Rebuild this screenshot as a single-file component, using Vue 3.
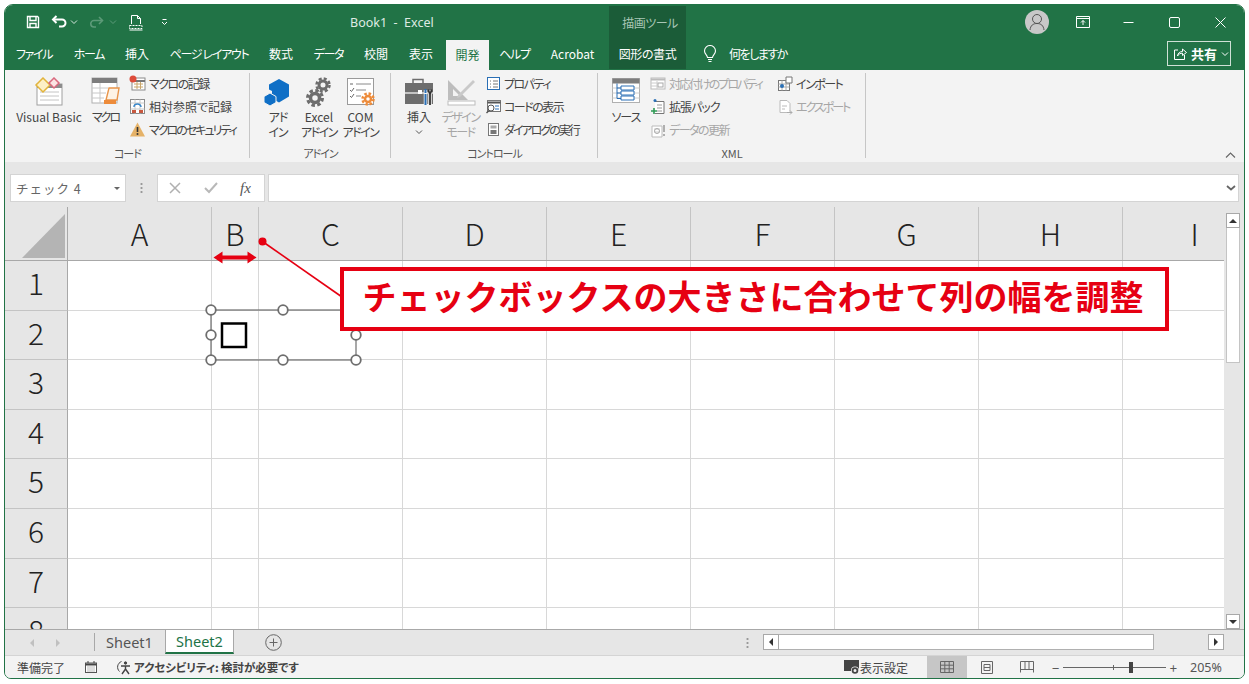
<script setup>
// Column widths and row labels of the visible part of the sheet
const columns = [
  { name: 'A', width: 144 },
  { name: 'B', width: 47 },
  { name: 'C', width: 144 },
  { name: 'D', width: 144 },
  { name: 'E', width: 144 },
  { name: 'F', width: 144 },
  { name: 'G', width: 144 },
  { name: 'H', width: 144 },
  { name: 'I', width: 144 }
]
const rows = ['1', '2', '3', '4', '5', '6', '7', '8']

const tabs = [
  { label: 'ファイル', width: 58, kana: true },
  { label: 'ホーム', width: 52, kana: true },
  { label: '挿入', width: 44 },
  { label: 'ページ レイアウト', width: 100, kana: true },
  { label: '数式', width: 44 },
  { label: 'データ', width: 51, kana: true },
  { label: '校閲', width: 44 },
  { label: '表示', width: 46 },
  { label: '開発', width: 43, active: true },
  { label: 'ヘルプ', width: 51, kana: true },
  { label: 'Acrobat', width: 65 }
]

// Selection handles of the checkbox, in page coordinates
const handles = [
  [211, 310], [283, 310], [356, 310],
  [211, 335], [356, 335],
  [211, 360], [283, 360], [356, 360]
]
</script>

<template>
  <div class="page">
    <div class="window">
      <!-- title bar -->
      <div class="titlebar">
        <div class="qat">
          <svg class="qi" style="margin-left:20px" width="16" height="16" viewBox="0 0 16 16" fill="none" stroke="#fff" stroke-width="1.4"><path d="M2.500 2.500h10l1 1v10h-11z"/><path d="M5 2.500v4h6v-4M5 13.500v-4h6v4"/></svg>
          <svg class="qi" style="margin-left:10px" width="17" height="16" viewBox="0 0 17 16" fill="none" stroke="#fff" stroke-width="2"><path d="M5.500 2 2 5.500 5.500 9"/><path d="M2.500 5.500H11a3.500 3.500 0 0 1 0 7H8"/></svg>
          <svg class="qi" style="margin-left:2px" width="8" height="6" viewBox="0 0 8 6" fill="none" stroke="#d6e6dc" stroke-width="1"><path d="M1 1.500 4 4.500 7 1.500"/></svg>
          <svg class="qi" style="margin-left:10px" width="16" height="16" viewBox="0 0 16 16" fill="none" stroke="#5c9a78" stroke-width="1.6"><path d="M11 3l3.500 3.500L11 10"/><path d="M14 6.500H6a3.200 3.200 0 0 0 0 6.500h2"/></svg>
          <svg class="qi" style="margin-left:5px" width="8" height="6" viewBox="0 0 8 6" fill="none" stroke="#5c9a78" stroke-width="1"><path d="M1 1.500 4 4.500 7 1.500"/></svg>
          <svg class="qi" style="margin-left:11px" width="16" height="17" viewBox="0 0 16 17" fill="none" stroke="#fff" stroke-width="1"><path d="M3.500 10V1.500h6l3 3V10M9.500 1.500v3h3"/><path d="M1.500 11.500h12.500v3H1.500z" stroke-dasharray="2 1"/><path d="M1.500 16h13"/></svg>
          <svg class="qi" style="margin-left:17px" width="7" height="8" viewBox="0 0 7 8" fill="none" stroke="#fff" stroke-width="1"><path d="M1.500 1.500h4M1 4l2.500 2.500L6 4"/></svg>
        </div>
        <div class="doc-title">Book1&nbsp; -&nbsp; Excel</div>
        <div class="tool-title">描画ツール</div>
        <div class="win-controls">
          <div class="avatar">
            <svg width="24" height="24" viewBox="0 0 24 24" fill="none" stroke="#555" stroke-width="1"><circle cx="12" cy="9" r="4.500"/><path d="M5 20c.5-4.500 3-6.500 7-6.500s6.500 2 7 6.500"/></svg>
          </div>
          <svg class="ctl ctl-display" width="14" height="12" viewBox="0 0 14 12" fill="none" stroke="#fff" stroke-width="1"><path d="M.5.500h13v11H.5zM.5 2.500h13M7 9V4.500M5 6.500l2-2 2 2" /></svg>
          <svg class="ctl ctl-min" width="11" height="11" viewBox="0 0 11 11" stroke="#fff" stroke-width="1"><path d="M.5 5.500h10"/></svg>
          <svg class="ctl ctl-max" width="11" height="11" viewBox="0 0 11 11" fill="none" stroke="#fff" stroke-width="1"><rect x=".5" y=".5" width="10" height="10" rx="1.500"/></svg>
          <svg class="ctl ctl-close" width="11" height="11" viewBox="0 0 11 11" stroke="#fff" stroke-width="1"><path d="M.5.500l10 10M10.500.5l-10 10"/></svg>
        </div>
      </div>

      <!-- ribbon tabs -->
      <div class="tabs">
        <div
          v-for="t in tabs"
          :key="t.label"
          class="tab"
          :class="{ active: t.active, kana: t.kana }"
          :style="{ width: t.width + 'px' }"
        >{{ t.label }}</div>
        <div class="tool-tab tab kana">図形の書式</div>
        <svg class="bulb" width="14" height="18" viewBox="0 0 14 18" fill="none" stroke="#fff" stroke-width="1.100"><path d="M4.500 12.500C4.300 10 1.500 9 1.500 6a5.500 5.500 0 0 1 11 0c0 3-2.800 4-3 6.500z"/><path d="M5 14.500h4M5.500 16.500h3"/></svg>
        <div class="tab search ls15">何をしますか</div>
        <div class="share">
          <svg width="14" height="14" viewBox="0 0 14 14" fill="none" stroke="#fff" stroke-width="1"><path d="M5 3H1.500v9.500h10V8"/><path d="M4.500 9c.3-3 2.500-4.500 5-4.500V2l4 3.500-4 3V6.200C7.500 6.200 5.500 7 4.500 9z"/></svg>
          <b>共有</b>
          <svg width="8" height="6" viewBox="0 0 8 6" fill="none" stroke="#fff" stroke-width="1"><path d="M1 1.500 4 4.500 7 1.500"/></svg>
        </div>
      </div>

      <!-- ribbon -->
      <div class="ribbon">
        <div class="group" style="width:245px">
          <div class="group-body">
            <div class="big" style="margin-left:6px;width:76px">
              <svg class="big-icon" width="30" height="30" viewBox="0 0 30 30">
                <rect x="3" y="7" width="25" height="21" fill="#fff" stroke="#a0a0a0"/>
                <rect x="3" y="7" width="25" height="4" fill="#8c8c8c"/>
                <path d="M6 15h19M6 19h19M6 23h19" stroke="#c4c4c4"/>
                <path d="M9 1l7 7-7 7-7-7z" fill="#fdf0c6" stroke="#e2b43c" stroke-width="1.500"/>
                <path d="M20 1l5 5-5 5-5-5z" fill="#fbe3e3" stroke="#d9687e" stroke-width="1.500"/>
              </svg>
              <span>Visual Basic</span>
            </div>
            <div class="big" style="width:37px">
              <svg class="big-icon" width="30" height="30" viewBox="0 0 30 30">
                <rect x="1" y="1" width="25" height="25" fill="#fff" stroke="#b0b0b0"/>
                <rect x="1" y="1" width="25" height="5" fill="#7d7d7d"/>
                <path d="M1 11h16M1 16h14M1 21h12M9 6v20" stroke="#c8c8c8"/>
                <path d="M18 11h10l-2 12h-11z" fill="#fdf3e6" stroke="#e8944a" stroke-width="1.400"/>
                <rect x="13" y="23" width="12" height="4" fill="#ed8b3a"/>
              </svg>
              <span class="ls2">マクロ</span>
            </div>
            <div class="small-col" style="margin-left:5px">
              <div class="small">
                <svg width="17" height="17" viewBox="0 0 17 17"><rect x="3" y="3" width="13" height="12" fill="#fff" stroke="#8a8a8a"/><path d="M3 6h13" stroke="#777" stroke-width="2"/><path d="M5 9h9M5 12h9M8 7v7M11.500 7v7" stroke="#c9a66b"/><circle cx="4" cy="4" r="3.500" fill="#dd4b39"/></svg>
                <span class="ls15">マクロの記録</span>
              </div>
              <div class="small">
                <svg width="17" height="17" viewBox="0 0 17 17"><rect x="1.500" y="1.500" width="14" height="14" fill="#fff" stroke="#8a8a8a"/><path d="M1.500 5h14M1.500 11h14M6 1.500v14M11 1.500v14" stroke="#c8c8c8"/><path d="M5 9a3.500 3 0 0 1 7 0" fill="none" stroke="#3a87c9" stroke-width="1.500"/><path d="M3 12h4v3H3zM10 12h4v3h-4z" fill="#c8583f"/></svg>
                <span>相対参照で記録</span>
              </div>
              <div class="small">
                <svg width="17" height="17" viewBox="0 0 17 17"><path d="M8.500 1.500 16 15.500H1z" fill="#e5b268"/><path d="M8.500 6v5" stroke="#333" stroke-width="1.600"/><circle cx="8.500" cy="13" r="1" fill="#333"/></svg>
                <span class="ls2">マクロのセキュリティ</span>
              </div>
            </div>
          </div>
          <div class="group-label ls1">コード</div>
        </div>

        <div class="group" style="width:141px">
          <div class="group-body">
            <div class="big" style="margin-left:8px;width:40px">
              <svg class="big-icon" width="30" height="30" viewBox="0 0 30 30">
                <path d="M16 2l10 5.500v12l-10 6-7-4V14l-3-1.500V7.500z" fill="#0f6fc6"/>
                <path d="M7 16l6 3.500v6L7 29l-6-3.500v-6z" fill="#0f6fc6" stroke="#f3f3f3"/>
              </svg>
              <span class="ls1">アド<br>イン</span>
            </div>
            <div class="big" style="width:42px">
              <svg class="big-icon" width="30" height="30" viewBox="0 0 30 30" fill="none">
                <circle cx="19" cy="8" r="4" stroke="#6d6d6d" stroke-width="3"/>
                <circle cx="19" cy="8" r="6.500" stroke="#6d6d6d" stroke-width="2.500" stroke-dasharray="3 2.100"/>
                <circle cx="11" cy="21" r="4.500" stroke="#6d6d6d" stroke-width="3.500"/>
                <circle cx="11" cy="21" r="7.500" stroke="#6d6d6d" stroke-width="3" stroke-dasharray="3.500 2.400"/>
              </svg>
              <span>Excel<br><span class="ls15">アドイン</span></span>
            </div>
            <div class="big" style="width:41px">
              <svg class="big-icon" width="30" height="30" viewBox="0 0 30 30" fill="none">
                <rect x="1.500" y="1.500" width="26" height="26" fill="#fff" stroke="#9a9a9a"/>
                <path d="M10 7h15M10 13h10M10 19h5" stroke="#8a8a8a"/>
                <path d="M4 7h3M4 13l1.500 1.500L8 11M4 19l1.500 1.500L8 17" stroke="#666"/>
                <circle cx="22" cy="22" r="3" stroke="#ed8b3a" stroke-width="2.500"/>
                <circle cx="22" cy="22" r="5.500" stroke="#ed8b3a" stroke-width="2.500" stroke-dasharray="2.500 1.800"/>
              </svg>
              <span>COM<br><span class="ls15">アドイン</span></span>
            </div>
          </div>
          <div class="group-label ls1">アドイン</div>
        </div>

        <div class="group" style="width:207px">
          <div class="group-body">
            <div class="big" style="margin-left:9px;width:38px">
              <svg class="big-icon" width="30" height="30" viewBox="0 0 30 30">
                <path d="M9 6V2.500h10V6" fill="none" stroke="#6d6d6d" stroke-width="1.500"/>
                <rect x="1" y="6" width="28" height="9" fill="#6d6d6d"/>
                <rect x="1" y="15" width="28" height="2" fill="#c4c4c4"/>
                <rect x="1" y="17" width="28" height="10" fill="#6d6d6d"/>
                <rect x="14" y="13" width="4" height="4" fill="#fff"/>
                <path d="M21.500 13v14" stroke="#f3f3f3" stroke-width="3.500"/>
                <path d="M26 13v14" stroke="#f3f3f3" stroke-width="3.500"/>
                <path d="M21.500 12v4M21.500 17v11" stroke="#2a6fb5" stroke-width="2"/>
                <path d="M24.500 12.500c0 3 1.500 3.500 1.500 5V28M27.500 12.500c0 3-1.500 3.500-1.500 5" fill="none" stroke="#333" stroke-width="1.800"/>
              </svg>
              <span>挿入</span>
              <svg class="more" width="8" height="6" viewBox="0 0 8 6" fill="none" stroke="#555" stroke-width="1"><path d="M1 1.500 4 4.500 7 1.500"/></svg>
            </div>
            <div class="big disabled" style="margin-left:3px;width:39px">
              <svg class="big-icon" width="30" height="30" viewBox="0 0 30 30" fill="none">
                <path d="M2 3v20h20zM7 12v7h7z" fill="#bdbdbd" fill-rule="evenodd"/>
                <path d="M12 18 27 3l2 2-15 15-3 1z" fill="#c9c9c9"/>
                <rect x="2" y="24" width="27" height="4" fill="#fff" stroke="#bdbdbd"/>
              </svg>
              <span class="ls15">デザイン<br>モード</span>
            </div>
            <div class="small-col" style="margin-left:6px">
              <div class="small">
                <svg width="15" height="15" viewBox="0 0 15 15" fill="none"><rect x="1.500" y="1.500" width="12" height="12" fill="#fff" stroke="#2a6fb5"/><path d="M4 5h1M7 5h5M4 8h1M7 8h5M4 11h1M7 11h5" stroke="#777"/></svg>
                <span class="ls15">プロパティ</span>
              </div>
              <div class="small">
                <svg width="15" height="15" viewBox="0 0 15 15" fill="none"><rect x="1.500" y="1.500" width="13" height="11" fill="#fff" stroke="#777"/><path d="M1.500 3.500h13" stroke="#555" stroke-width="2"/><path d="M9 7h4M9 10h4" stroke="#2a6fb5"/><circle cx="5" cy="9" r="3" fill="#fff" stroke="#555"/><path d="M3 11.500.5 14" stroke="#555" stroke-width="1.400"/></svg>
                <span class="ls15">コードの表示</span>
              </div>
              <div class="small">
                <svg width="15" height="15" viewBox="0 0 15 15" fill="none"><rect x="2.500" y="1.500" width="10" height="12" fill="#fff" stroke="#777"/><rect x="4.500" y="3.500" width="6" height="3" fill="#aaa"/><rect x="4.500" y="8" width="6" height="4" fill="#777"/></svg>
                <span class="ls2">ダイアログの実行</span>
              </div>
            </div>
          </div>
          <div class="group-label ls1">コントロール</div>
        </div>

        <div class="group" style="width:268px">
          <div class="group-body">
            <div class="big" style="margin-left:10px;width:36px">
              <svg class="big-icon" width="30" height="30" viewBox="0 0 30 30" fill="none">
                <rect x="1.500" y="1.500" width="27" height="24" fill="#fff" stroke="#b0b0b0"/>
                <rect x="1.500" y="1.500" width="27" height="5" fill="#7d7d7d"/>
                <path d="M1.500 11h27M1.500 16h27M1.500 21h27" stroke="#ccc"/>
                <path d="M6 6.500v15h4M6 11h4M6 16h4" stroke="#2a6fb5"/>
                <path d="M10 9h13v4H10zM10 14h13v4H10zM10 19h13v4H10z" fill="#fff" stroke="#2a6fb5"/>
              </svg>
              <span class="ls1">ソース</span>
            </div>
            <div class="small-col" style="margin-left:6px;width:127px">
              <div class="small disabled">
                <svg width="16" height="15" viewBox="0 0 16 15" fill="none"><rect x="1" y="2" width="14" height="11" fill="#fff" stroke="#bbb"/><path d="M1 3.500h14" stroke="#bbb" stroke-width="2"/><path d="M1 7h6M1 10h6M7 5v8" stroke="#ccc"/><rect x="8" y="7" width="5" height="4" stroke="#aaa"/></svg>
                <span class="ls2">対応付けのプロパティ</span>
              </div>
              <div class="small">
                <svg width="16" height="17" viewBox="0 0 16 17" fill="none"><path d="M5 3.500h9v12H5" fill="#fff" stroke="#777"/><path d="M7 7h5M7 10h5M7 13h5" stroke="#999"/><circle cx="5" cy="2.500" r="1.500" fill="#2a6fb5"/><path d="M1 13h6M4 10v6" stroke="#2e9a54" stroke-width="1.600"/></svg>
                <span class="ls1">拡張パック</span>
              </div>
              <div class="small disabled">
                <svg width="16" height="16" viewBox="0 0 16 16" fill="none"><path d="M2 4h10v11H2z" fill="#fff" stroke="#bbb"/><path d="M4 7h6M4 10h6" stroke="#ccc"/><circle cx="7" cy="9" r="2.500" stroke="#aaa"/><path d="M14 3v7M14 12v2" stroke="#999" stroke-width="1.500"/></svg>
                <span class="ls15">データの更新</span>
              </div>
            </div>
            <div class="small-col">
              <div class="small">
                <svg width="16" height="16" viewBox="0 0 16 16" fill="none"><rect x="1.500" y="4.500" width="11" height="10" fill="#fff" stroke="#777"/><path d="M1.500 8h11M1.500 11h11M5 4.500v10M9 4.500v10" stroke="#aaa"/><path d="M9 1h6v6H9z" fill="#fff" stroke="#777"/><circle cx="5" cy="10" r="2" fill="#2a6fb5"/></svg>
                <span class="ls15">インポート</span>
              </div>
              <div class="small disabled">
                <svg width="16" height="16" viewBox="0 0 16 16" fill="none"><path d="M3 1.500h7l3 3v9H3z" fill="#fff" stroke="#bbb"/><path d="M5 7h5M5 10h3" stroke="#bbb"/><path d="M10 13.500h5M13 11.500l2 2-2 2" stroke="#aaa"/></svg>
                <span class="ls2">エクスポート</span>
              </div>
            </div>
          </div>
          <div class="group-label">XML</div>
        </div>

        <div class="ribbon-rest">
          <svg width="11" height="7" viewBox="0 0 11 7" fill="none" stroke="#666" stroke-width="1.100"><path d="M1 5.500 5.500 1 10 5.500"/></svg>
        </div>
      </div>

      <!-- formula bar -->
      <div class="formula">
        <div class="namebox">
          <span>チェック 4</span>
          <i class="caret"></i>
        </div>
        <div class="fdots"></div>
        <div class="fbtns">
          <svg width="12" height="12" viewBox="0 0 12 12" stroke="#b0b0b0" stroke-width="1.500"><path d="M1 1l10 10M11 1 1 11"/></svg>
          <svg width="14" height="12" viewBox="0 0 14 12" fill="none" stroke="#b8b8b8" stroke-width="2"><path d="M1 6l4 4 8-9"/></svg>
          <span class="fx">fx</span>
        </div>
        <div class="finput">
          <svg width="10" height="6" viewBox="0 0 10 6" fill="none" stroke="#666" stroke-width="1.800"><path d="M1 1l4 3.500L9 1"/></svg>
        </div>
      </div>

      <!-- sheet -->
      <div class="sheet">
        <div class="grid">
          <div class="col-head">
            <div class="corner"><i></i></div>
            <div v-for="c in columns" :key="c.name" class="col-cell" :style="{ width: c.width + 'px' }">{{ c.name }}</div>
          </div>
          <div v-for="r in rows" :key="r" class="row">
            <div class="row-cell">{{ r }}</div>
            <div v-for="c in columns" :key="c.name" class="cell" :style="{ width: c.width + 'px' }"></div>
          </div>

          <!-- drawing layer floats over the cells -->
          <svg class="overlay" viewBox="5 207 1219 423" width="1219" height="423">
            <rect x="211" y="310" width="145" height="50" fill="none" stroke="#6e6e6e" stroke-width="1.200"/>
            <circle
              v-for="(h, i) in handles"
              :key="i"
              :cx="h[0]"
              :cy="h[1]"
              r="4.800"
              fill="#fff"
              stroke="#6e6e6e"
              stroke-width="1.800"
            />
            <rect x="222" y="323.500" width="24" height="23.500" fill="#fff" stroke="#000" stroke-width="2.500"/>
            <circle cx="262.500" cy="241.500" r="4" fill="#e60012"/>
            <path d="M262.500 241.500 342 297" stroke="#e60012" stroke-width="1.600"/>
            <path d="M213.500 257.500l9-6v4h25v-4l9 6-9 6v-4h-25v4z" fill="#e60012"/>
          </svg>
          <div class="callout">チェックボックスの大きさに合わせて列の幅を調整</div>
        </div>
        <div class="vscroll">
          <div class="sbtn"><i class="tri up"></i></div>
          <div class="vthumb"></div>
          <div class="vtrack"></div>
          <div class="sbtn"><i class="tri down"></i></div>
        </div>
      </div>

      <!-- sheet tabs -->
      <div class="sheetbar">
        <div class="nav">
          <i class="tri left dim"></i>
          <i class="tri right dim"></i>
        </div>
        <div class="sheet-tab first">Sheet1</div>
        <div class="sheet-tab current">Sheet2</div>
        <div class="add">
          <svg width="17" height="17" viewBox="0 0 17 17" fill="none" stroke="#666" stroke-width="1"><circle cx="8.500" cy="8.500" r="7.800"/><path d="M8.500 4.500v8M4.500 8.500h8"/></svg>
        </div>
        <div class="hdots"></div>
        <div class="hscroll">
          <div class="sbtn"><i class="tri left"></i></div>
          <div class="hthumb"></div>
          <div class="htrack"></div>
          <div class="sbtn"><i class="tri right"></i></div>
        </div>
      </div>

      <!-- status bar -->
      <div class="status">
        <span class="ready">準備完了</span>
        <svg class="st-macro" width="12" height="12" viewBox="0 0 12 12"><rect x=".5" y="2" width="11" height="9.500" fill="#fff" stroke="#555"/><path d="M.5 3.500h11" stroke="#444" stroke-width="2"/><path d="M2.500 6h7M2.500 8h7M2.500 10h7" stroke="#777" stroke-dasharray="1 1"/><path d="M3 0v2M9 0v2" stroke="#444"/></svg>
        <svg class="st-acc" width="16" height="15" viewBox="0 0 16 15" fill="none" stroke="#444"><path d="M5.500 1.500a6 6 0 0 0-2 10"/><circle cx="9.500" cy="3" r="1.200" fill="#444"/><path d="M5 6h9M9.500 6v3M6 14l3.500-5 3.500 5" stroke-width="1.400"/></svg>
        <span class="acc">アクセシビリティ: 検討が必要です</span>
        <svg class="st-view" width="16" height="15" viewBox="0 0 16 15"><rect x="0" y="0" width="15" height="11" fill="#444"/><circle cx="11" cy="10.500" r="4" fill="#f3f3f3"/><circle cx="11" cy="10.500" r="2.400" fill="none" stroke="#444" stroke-width="1.800"/></svg>
        <span class="view-label">表示設定</span>
        <div class="vbtn on">
          <svg width="14" height="12" viewBox="0 0 14 12" fill="none" stroke="#666"><path d="M.5.500h13v11H.5zM.5 4.200h13M.5 7.800h13M4.800.5v11M9.200.5v11"/></svg>
        </div>
        <div class="vbtn">
          <svg width="12" height="13" viewBox="0 0 12 13" fill="none" stroke="#666"><path d="M.5.500h11v12H.5z"/><path d="M3 3.500h6v6H3zM3 6.500h6"/></svg>
        </div>
        <div class="vbtn">
          <svg width="14" height="12" viewBox="0 0 14 12" fill="none" stroke="#666"><path d="M.5 11.500V.5h13v11M.5 8.500h13M5 .5v8M9 .5v8"/></svg>
        </div>
        <div class="zoom">
          <span class="zsign">−</span>
          <div class="zline"><i class="ztick"></i><i class="zknob"></i></div>
          <span class="zsign">+</span>
        </div>
        <span class="zval">205%</span>
      </div>
    </div>
  </div>
</template>

<style>
html, body {
  margin: 0;
  background: #fff;
}
</style>

<style scoped>
.page {
  width: 1249px;
  height: 684px;
  padding: 4px 0 0 4px;
  box-sizing: border-box;
  overflow: hidden;
  font-family: "Noto Sans CJK JP", "Noto Sans", sans-serif;
  font-feature-settings: "palt";
  color: #444;
}
.window {
  width: 1241px;
  height: 675px;
  box-sizing: border-box;
  border: 1px solid #217346;
  border-radius: 9px 9px 7px 7px;
  overflow: hidden;
  display: flex;
  flex-direction: column;
  background: #f3f3f3;
}

/* katakana in the Office UI font runs much narrower than Noto */
.ls1 { letter-spacing: -1px; }
.ls15 { letter-spacing: -1.500px; }
.ls2 { letter-spacing: -2px; }

/* title bar */
.titlebar {
  height: 33px;
  background: #217346;
  display: flex;
  flex-shrink: 0;
  color: #dfeae3;
}
.qat {
  width: 340px;
  display: flex;
  align-items: center;
  padding-top: 1px;
}
.qi {
  flex-shrink: 0;
}
.doc-title {
  width: 264px;
  font-size: 12.500px;
  line-height: 36px;
  padding-left: 5px;
  box-sizing: border-box;
  font-family: "Noto Sans", sans-serif;
}
.tool-title {
  width: 77px;
  margin-top: 1px;
  padding: 0 0 3px 5px;
  box-sizing: border-box;
  background: #1b5c38;
  font-size: 12px;
  line-height: 33px;
  text-align: center;
  color: #a9c6b5;
  letter-spacing: -0.500px;
}
.win-controls {
  flex: 1;
  display: flex;
  align-items: center;
  padding-top: 1px;
}
.avatar {
  width: 24px;
  height: 24px;
  border-radius: 50%;
  background: #c8c8c8;
  margin-left: 339px;
}
.ctl {
  flex-shrink: 0;
}
.ctl-display { margin-left: 27px; }
.ctl-min { margin-left: 33px; }
.ctl-max { margin-left: 35px; }
.ctl-close { margin-left: 35px; }

/* tabs */
.tabs {
  height: 32px;
  background: #217346;
  display: flex;
  flex-shrink: 0;
  align-items: stretch;
  box-sizing: border-box;
  border-bottom: 1px solid #217346;
}
.tab {
  font-size: 12px;
  color: #fff;
  text-align: center;
  line-height: 31px;
  white-space: nowrap;
  flex-shrink: 0;
}
.tab.kana {
  letter-spacing: -1.300px;
}
.tab.active {
  background: #f3f3f3;
  color: #217346;
  margin: 2px 0 -1px 2px;
  line-height: 29px;
}
.tool-tab {
  width: 77px;
  margin-left: 4px;
  background: #1b5c38;
}
.tool-tab.kana {
  letter-spacing: -0.400px;
}
.bulb {
  margin: 7px 0 0 17px;
  flex-shrink: 0;
}
.search {
  margin-left: 12px;
  color: #fff;
}
.share {
  margin: 3px 13px 3px auto;
  width: 64px;
  box-sizing: border-box;
  border: 1px solid #cfe0d6;
  display: flex;
  align-items: center;
  gap: 4px;
  padding-left: 5px;
  color: #fff;
  font-size: 13px;
  white-space: nowrap;
  flex-shrink: 0;
}
.share b {
  font-weight: 700;
}

/* ribbon */
.ribbon {
  height: 92px;
  display: flex;
  flex-shrink: 0;
  background: #f3f3f3;
  font-size: 12px;
  color: #444;
}
.group {
  display: flex;
  flex-direction: column;
  box-sizing: border-box;
  position: relative;
}
.group::after {
  content: "";
  position: absolute;
  right: 0;
  top: 3px;
  bottom: 4px;
  width: 1px;
  background: #c6c6c6;
}
.group-body {
  flex: 1;
  display: flex;
}
.group-label {
  height: 16px;
  font-size: 11px;
  line-height: 14px;
  text-align: center;
  color: #555;
}
.big {
  display: flex;
  flex-direction: column;
  align-items: center;
  flex-shrink: 0;
  padding-top: 7px;
  text-align: center;
  line-height: 15px;
  white-space: nowrap;
}
.big-icon {
  height: 32px;
  padding-bottom: 2px;
  box-sizing: border-box;
  flex-shrink: 0;
}
.more {
  margin-top: 5px;
}
.disabled {
  color: #a6a6a6;
}
.small-col {
  display: flex;
  flex-direction: column;
  padding-top: 2px;
  flex-shrink: 0;
}
.small {
  height: 23px;
  display: flex;
  align-items: center;
  gap: 3px;
  white-space: nowrap;
}
.small svg {
  flex-shrink: 0;
}
.ribbon-rest {
  flex: 1;
  display: flex;
  justify-content: flex-end;
  align-items: flex-end;
  padding: 0 8px 3px 0;
}

/* formula bar */
.formula {
  height: 45px;
  flex-shrink: 0;
  background: #e6e6e6;
  display: flex;
  align-items: flex-start;
  padding: 12px 5px 0 5px;
  box-sizing: border-box;
}
.namebox {
  width: 116px;
  height: 28px;
  background: #fff;
  border: 1px solid #d4d4d4;
  box-sizing: border-box;
  display: flex;
  align-items: center;
  justify-content: space-between;
  padding: 0 5px;
  font-size: 12.500px;
  letter-spacing: 1px;
  color: #666;
  font-feature-settings: normal;
}
.caret {
  border-left: 3px solid transparent;
  border-right: 3px solid transparent;
  border-top: 3px solid #666;
}
.fdots {
  width: 31px;
  height: 28px;
  background: radial-gradient(circle, #999 1px, transparent 1.200px) center / 3px 4px repeat-y;
  clip-path: inset(8px 0);
}
.fbtns {
  width: 108px;
  height: 28px;
  background: #fff;
  border: 1px solid #d4d4d4;
  box-sizing: border-box;
  display: flex;
  align-items: center;
  padding-left: 11px;
  gap: 23px;
}
.fx {
  font-family: "Liberation Serif", serif;
  font-style: italic;
  font-size: 15px;
  color: #555;
  margin-left: -1px;
}
.finput {
  flex: 1;
  margin-left: 3px;
  height: 28px;
  background: #fff;
  border: 1px solid #d4d4d4;
  box-sizing: border-box;
  display: flex;
  align-items: center;
  justify-content: flex-end;
  padding-right: 2px;
}

/* sheet */
.sheet {
  height: 423px;
  flex-shrink: 0;
  display: flex;
  background: #fff;
}
.grid {
  width: 1219px;
  flex-shrink: 0;
  position: relative;
  overflow: hidden;
  border-bottom: 1px solid #a8a8a8;
  box-sizing: border-box;
}
.col-head {
  height: 54px;
  display: flex;
  background: #e6e6e6;
  border-bottom: 1px solid #a8a8a8;
  box-sizing: border-box;
}
.corner {
  width: 63px;
  flex-shrink: 0;
  border-right: 1px solid #a8a8a8;
  box-sizing: border-box;
  position: relative;
}
.corner i {
  position: absolute;
  right: 2px;
  bottom: 2px;
  width: 43px;
  height: 44px;
  background: #b4b4b4;
  clip-path: polygon(100% 0, 100% 100%, 0 100%);
}
.col-cell {
  flex-shrink: 0;
  box-sizing: border-box;
  border-right: 1px solid #c4c4c4;
  text-align: center;
  font-size: 30px;
  line-height: 52px;
  color: #222;
  font-weight: 300;
}
.row {
  height: 49.600px;
  display: flex;
}
.row-cell {
  width: 63px;
  flex-shrink: 0;
  box-sizing: border-box;
  background: #e6e6e6;
  border-right: 1px solid #a8a8a8;
  border-bottom: 1px solid #c4c4c4;
  text-align: center;
  font-size: 30px;
  line-height: 43px;
  color: #222;
  font-weight: 300;
}
.cell {
  flex-shrink: 0;
  box-sizing: border-box;
  border-right: 1px solid #d8d8d8;
  border-bottom: 1px solid #d8d8d8;
}
.overlay {
  position: absolute;
  left: 0;
  top: 0;
  pointer-events: none;
}
.callout {
  position: absolute;
  left: 335px;
  top: 60px;
  width: 829px;
  height: 64px;
  box-sizing: border-box;
  background: #fff;
  border: 4px solid #e60012;
  color: #e60012;
  font-weight: 700;
  font-size: 34px;
  line-height: 50px;
  text-align: center;
  text-indent: -3px;
  white-space: nowrap;
  font-feature-settings: normal;
}
.vscroll {
  flex: 1;
  display: flex;
  flex-direction: column;
  padding: 6px 1px 0 2px;
  background: #e6e6e6;
  border-bottom: 1px solid #a8a8a8;
  box-sizing: border-box;
}
.sbtn {
  width: 14px;
  height: 15px;
  flex-shrink: 0;
  background: #fff;
  border: 1px solid #a8a8a8;
  box-sizing: border-box;
  display: flex;
  align-items: center;
  justify-content: center;
}
.vthumb {
  height: 135px;
  background: #fff;
  border: 1px solid #c4c4c4;
  border-top: 0;
  box-sizing: border-box;
  width: 14px;
  flex-shrink: 0;
}
.vtrack {
  flex: 1;
}
.tri {
  width: 0;
  height: 0;
  display: block;
}
.tri.up {
  border-left: 4px solid transparent;
  border-right: 4px solid transparent;
  border-bottom: 4px solid #333;
}
.tri.down {
  border-left: 4px solid transparent;
  border-right: 4px solid transparent;
  border-top: 4px solid #333;
}
.tri.left {
  border-top: 4px solid transparent;
  border-bottom: 4px solid transparent;
  border-right: 4px solid #333;
}
.tri.right {
  border-top: 4px solid transparent;
  border-bottom: 4px solid transparent;
  border-left: 4px solid #333;
}
.tri.left.dim {
  border-right-color: #c0c0c0;
}
.tri.right.dim {
  border-left-color: #c0c0c0;
}

/* sheet tabs */
.sheetbar {
  height: 26px;
  flex-shrink: 0;
  background: #e6e6e6;
  display: flex;
  border-bottom: 1px solid #d4d4d4;
  box-sizing: border-box;
}
.nav {
  width: 89px;
  display: flex;
  align-items: center;
  gap: 22px;
  padding-left: 25px;
  box-sizing: border-box;
  flex-shrink: 0;
}
.sheet-tab {
  font-size: 14.500px;
  line-height: 24px;
  text-align: center;
  font-family: "Noto Sans", sans-serif;
  color: #555;
  flex-shrink: 0;
}
.sheet-tab.first {
  width: 71px;
  background: linear-gradient(#a8a8a8, #a8a8a8) left 3px / 1px 18px no-repeat;
}
.sheet-tab.current {
  width: 69px;
  height: 25px;
  background: #fff;
  color: #217346;
  margin-top: -1px;
  border-right: 1px solid #a8a8a8;
  border-left: 1px solid #a8a8a8;
  border-bottom: 2px solid #217346;
  box-sizing: border-box;
}
.add {
  width: 78px;
  display: flex;
  align-items: center;
  justify-content: center;
  flex-shrink: 0;
}
.hdots {
  width: 3px;
  margin: 7px 0 7px 434px;
  background: radial-gradient(circle, #999 1px, transparent 1.200px) center top / 3px 4px repeat-y;
  flex-shrink: 0;
}
.hscroll {
  display: flex;
  margin: 4px 0 0 14px;
  height: 16px;
  width: 461px;
  flex-shrink: 0;
}
.hscroll .sbtn {
  height: 16px;
  width: 16px;
}
.hthumb {
  width: 375px;
  background: #fff;
  border: 1px solid #b0b0b0;
  border-left: 0;
  box-sizing: border-box;
  flex-shrink: 0;
}
.htrack {
  flex: 1;
}

/* status bar */
.status {
  flex: 1;
  display: flex;
  align-items: center;
  font-size: 12px;
  background: #f3f3f3;
  color: #444;
  white-space: nowrap;
}
.ready {
  margin-left: 12px;
  width: 68px;
  flex-shrink: 0;
}
.st-macro { flex-shrink: 0; }
.st-acc { margin-left: 19px; flex-shrink: 0; }
.acc {
  font-weight: 700;
  font-size: 11.500px;
  letter-spacing: -0.100px;
  margin-left: 2px;
  width: 710px;
  flex-shrink: 0;
}
.st-view { flex-shrink: 0; }
.view-label {
  width: 67px;
  flex-shrink: 0;
  font-size: 12px;
}
.vbtn {
  width: 40px;
  height: 100%;
  display: flex;
  align-items: center;
  justify-content: center;
  flex-shrink: 0;
}
.vbtn.on {
  background: #c6c6c6;
}
.zoom {
  display: flex;
  align-items: center;
  gap: 4px;
  margin-left: 5px;
  width: 125px;
  flex-shrink: 0;
}
.zsign {
  font-size: 13px;
  color: #555;
}
.zline {
  flex: 1;
  height: 1px;
  background: #666;
  position: relative;
}
.ztick {
  position: absolute;
  left: 50px;
  top: -2px;
  width: 1px;
  height: 5px;
  background: #666;
}
.zknob {
  position: absolute;
  left: 66px;
  top: -5px;
  width: 4px;
  height: 11px;
  background: #444;
}
.zval {
  margin-left: 13px;
  font-size: 12.500px;
  font-family: "Noto Sans", sans-serif;
  color: #555;
}
</style>
